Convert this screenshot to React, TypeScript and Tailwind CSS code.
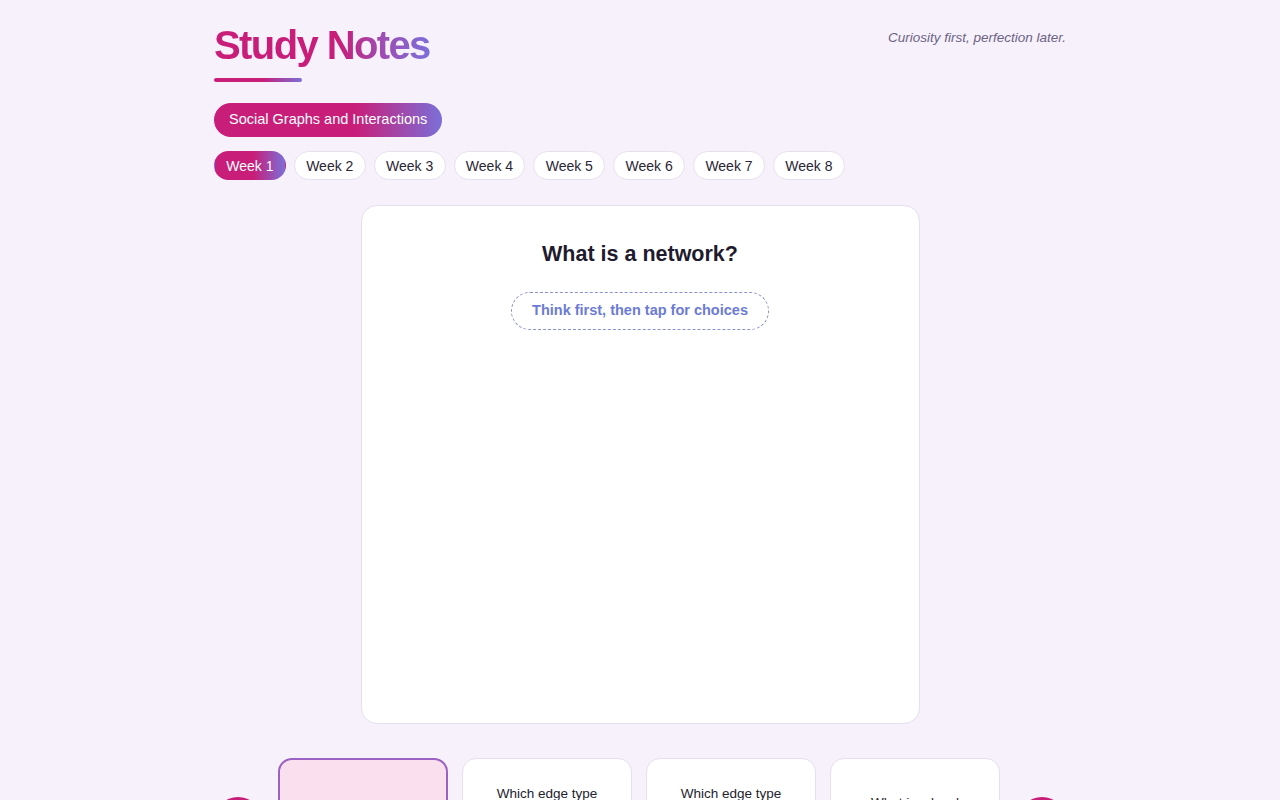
import React from "react";

const weeks = ["Week 1", "Week 2", "Week 3", "Week 4", "Week 5", "Week 6", "Week 7", "Week 8"];

const thumbs = [
  { text: "What is a network?", active: true },
  { text: "Which edge type represents a mutual friendship between two users?", active: false },
  { text: "Which edge type shows one-way following relationships?", active: false },
  { text: "What is a local clustering coefficient?", active: false },
];

export default function App() {
  return (
    <div
      className="min-h-[800px] w-full bg-[#f7f1fb] text-[#1f1b2e]"
      style={{ fontFamily: '"Liberation Sans", Arial, Helvetica, sans-serif' }}
    >
      <div className="mx-auto w-[852px] pt-[21px]">
        <header className="flex items-start justify-between">
          <div>
            <h1 className="inline-block bg-[linear-gradient(90deg,#c81e79_0%,#c81e79_58%,#9d4db3_78%,#7b6fd8_100%)] bg-clip-text text-[40px] font-bold leading-[48px] tracking-[-0.04em] text-transparent">
              Study Notes
            </h1>
            <div className="mt-[9px] h-[4px] w-[88px] rounded-full bg-[linear-gradient(90deg,#c81e79_0%,#c81e79_55%,#7b6fd8_100%)]" />
          </div>
          <p className="mt-[7px] text-[13.5px] italic leading-[20px] text-[#6b6383]">
            Curiosity first, perfection later.
          </p>
        </header>

        <div className="mt-[21px] flex">
          <span className="flex h-[34px] items-center rounded-full bg-[linear-gradient(90deg,#c81e79_0%,#c81e79_62%,#7b6fd8_100%)] px-[15px] text-[14.5px] text-white">
            Social Graphs and Interactions
          </span>
        </div>

        <div className="mt-[14px] flex gap-[8px]">
          {weeks.map((w, i) =>
            i === 0 ? (
              <button
                key={w}
                className="flex h-[29px] w-[71.85px] items-center justify-center rounded-full border border-transparent bg-[linear-gradient(90deg,#c81e79_0%,#c81e79_55%,#7b6fd8_100%)] pt-[1px] text-[14px] text-white"
              >
                {w}
              </button>
            ) : (
              <button
                key={w}
                className="flex h-[29px] w-[71.85px] items-center justify-center rounded-full border border-[#e6e0ee] bg-white pt-[1px] text-[14px] text-[#2a2535]"
              >
                {w}
              </button>
            )
          )}
        </div>

        <div className="mx-auto mt-[25px] flex h-[519px] w-[559px] flex-col items-center rounded-[16px] border border-[#e5dff0] bg-white pt-[34px]">
          <h2 className="text-[21.5px] font-bold leading-[28px] text-[#1f1b2e]">What is a network?</h2>
          <button className="mt-[24px] flex h-[38px] items-center rounded-full border border-dashed border-[#8b91cc] px-[20px] text-[14.5px] font-bold text-[#6c7bd5]">
            Think first, then tap for choices
          </button>
        </div>

        <div className="mt-[34px] flex items-center">
          <button className="flex h-[48px] w-[48px] items-center justify-center rounded-full bg-[#c81e79] text-white">
            <svg width="18" height="18" viewBox="0 0 24 24" fill="none" stroke="currentColor" strokeWidth="2.5" strokeLinecap="round" strokeLinejoin="round">
              <path d="M15 18l-6-6 6-6" />
            </svg>
          </button>
          <div className="ml-[16px] flex gap-[14px]">
            {thumbs.map((t) => (
              <div
                key={t.text}
                className={
                  t.active
                    ? "flex h-[126px] w-[170px] items-center justify-center rounded-[14px] border-2 border-[#9a62c3] bg-[#fae0ef] px-[21px] text-center text-[13.5px] leading-[18.5px] text-[#221d2e]"
                    : "flex h-[126px] w-[170px] items-center justify-center rounded-[14px] border border-[#e5dff0] bg-white px-[22px] pt-[1px] text-center text-[13.5px] leading-[18.5px] text-[#221d2e]"
                }
              >
                {t.text}
              </div>
            ))}
          </div>
          <button className="ml-auto flex h-[48px] w-[48px] items-center justify-center rounded-full bg-[#c81e79] text-white">
            <svg width="18" height="18" viewBox="0 0 24 24" fill="none" stroke="currentColor" strokeWidth="2.5" strokeLinecap="round" strokeLinejoin="round">
              <path d="M9 18l6-6-6-6" />
            </svg>
          </button>
        </div>
        <div className="h-[40px]" />
      </div>
    </div>
  );
}
